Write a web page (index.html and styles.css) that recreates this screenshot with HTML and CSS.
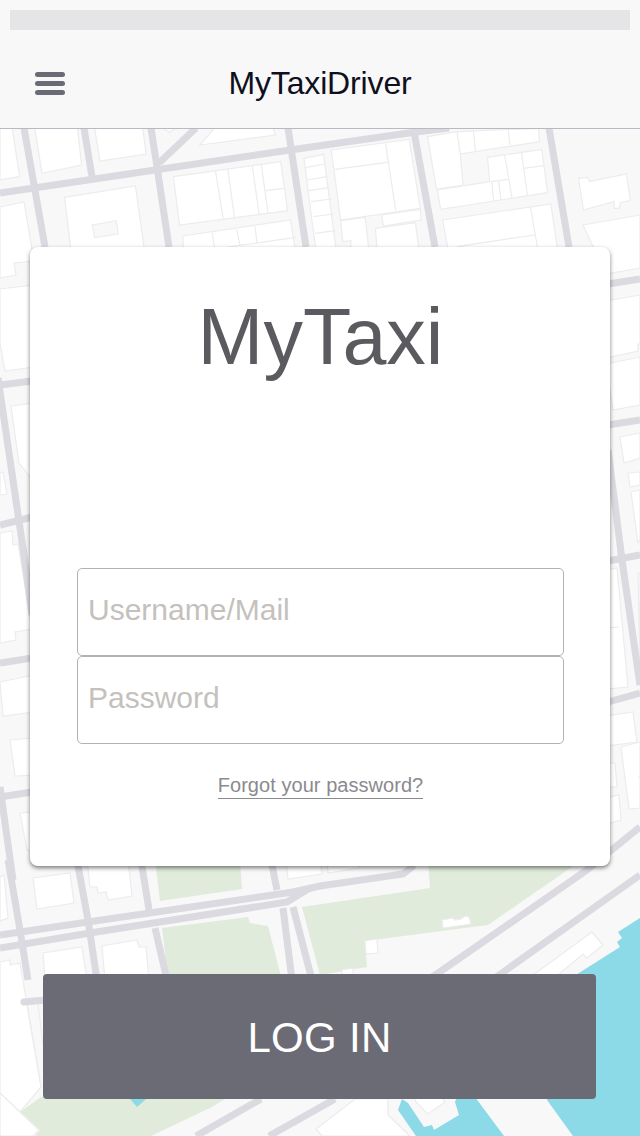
FILE: index.html
```html
<!DOCTYPE html>
<html>
<head>
    <title>MyTaxiDriver</title>
    <link rel="stylesheet" href="styles.css">
</head>
<body>
<svg class="map" viewBox="0 0 640 1136" width="640" height="1136">
    <!-- top strip -->
    <g transform="matrix(.408 0 0 .3333 0 0)">
        <g class="bld">
            <polygon points="85,385 190,385 200,495 103,520"/>
            <polygon points="232,385 350,385 358,462 245,483"/>
            <polygon points="490,435 525,385 670,385 675,405"/>
            <polygon points="400,385 430,385 415,397"/>
            <polygon points="0,385 30,385 48,530 0,540"/>
            <polygon points="425,530 688,485 705,632 440,675"/>
            <polyline points="528,512 547,655"/><polyline points="558,505 575,655"/><polyline points="618,495 635,642"/><polyline points="640,490 657,640"/><polyline points="652,572 695,565"/>
            <polygon points="158,592 332,558 355,760 175,760"/>
            <polygon class="alt" points="226,675 285,662 290,702 232,713"/>
            <polygon points="448,708 712,660 725,760 450,760"/>
            <polyline points="520,698 528,760"/><polyline points="580,688 588,735"/><polyline points="625,680 630,730"/><polyline points="450,760 725,712"/>
            <polygon points="745,475 793,463 825,760 775,760"/>
            <polyline points="748,503 797,492"/><polyline points="752,540 802,530"/><polyline points="757,572 806,563"/><polyline points="762,605 812,597"/><polyline points="768,650 818,642"/><polyline points="772,700 822,692"/>
            <polygon points="812,450 1003,418 1030,625 835,660"/>
            <polyline points="820,508 950,487"/><polyline points="945,430 970,632"/>
            <polygon points="835,662 895,652 905,760 860,760 860,722 840,725"/>
            <polygon points="935,645 1030,628 1032,660 940,678"/>
            <polygon points="920,685 1018,668 1028,760 925,760"/>
            <polygon points="1048,410 1120,395 1320,385 1322,425 1128,462 1135,555 1070,568"/>
            <polyline points="1120,395 1128,460"/><polyline points="1160,390 1165,452"/><polyline points="1245,385 1250,435"/>
            <polygon points="1072,570 1200,545 1195,472 1328,448 1342,578 1080,628"/>
            <polyline points="1237,465 1255,595"/><polyline points="1278,455 1293,588"/><polyline points="1283,505 1332,497"/><polyline points="1203,545 1245,538"/><polyline points="1205,545 1210,603"/><polyline points="1222,542 1228,600"/>
            <polygon points="1085,660 1350,612 1368,760 1100,760"/>
            <polyline points="1300,622 1320,760"/><polyline points="1120,740 1310,705"/>
            <polygon points="1418,535 1440,532 1445,545 1535,522 1545,602 1520,608 1518,625 1505,625 1505,605 1430,630"/>
        </g>
    </g>

    <!-- left edge -->
    <g class="bld">
        <polygon points="0,207 24,202 34,261 14,263 16,275 0,278"/>
        <polygon points="0,289 34,285 34,367 5,371 0,343"/>
        <polygon points="11,406 34,403 34,482 19,463"/>
        <polygon points="0,473 3,472 7,494 0,495"/>
        <polygon points="0,533 12,531 13,545 18,544 32,629 15,632 16,640 0,643"/>
        <polygon points="0,682 34,675 34,712 3,716"/>
        <polygon points="10,740 34,738 34,775 15,776"/>
        <polygon points="20,813 34,812 34,850 27,850"/>
    </g>

    <!-- right edge -->
    <g class="bld">
        <polygon points="583,225 640,215 640,268 606,274"/>
        <polygon points="606,301 640,295 640,344 638,344 638,351 606,358"/>
        <polygon points="606,364 640,357 640,405 613,410"/>
        <polygon points="620,437 640,433 640,458 624,463"/>
        <polygon points="628,473 640,472 640,485 630,487"/>
        <polygon points="631,492 640,490 640,540 638,543"/>
        <polygon points="606,570 617,568 628,687 606,689"/>
        <polyline points="606,628 619,627"/>
        <polygon points="638,573 640,573 640,670"/>
        <polygon points="606,716 633,712 637,742 606,746"/>
        <polygon points="621,747 640,742 640,808 629,809"/>
        <polyline points="638,777 640,777"/>
        <polygon points="606,763 615,763 617,787 606,787"/>
        <polygon points="606,798 619,795 621,820 606,824"/>
    </g>

    <!-- bottom area -->
    <g class="park">
        <polygon points="155,860 240,860 242,889 160,901"/>
        <polygon points="428,860 430,888 302,907 320,975 367,967 365,941 488,925 582,860"/>
        <polygon points="162,928 248,917 250,923 268,926 282,980 168,980"/>
        <polygon points="20,1112 41,1097 228,1097 212,1107 151,1136 35,1136 40,1130"/>
    </g>
    <g class="water">
        <polygon points="640,918 618,932 622,938 617,942 620,947 571,978 547,1100 573,1136 640,1136"/>
        <polygon points="457,1097 475,1097 504,1136 416,1136 398,1110 402,1099 408,1103 424,1127 432,1125 434,1130 459,1115 455,1102"/>
        <polygon points="130,1099 137,1107 146,1099"/>
    </g>
    <g class="bld">
        <polygon points="0,877 4,875 8,918 0,921"/>
        <polygon points="33,878 70,873 74,903 37,909"/>
        <polygon points="87,860 90,887 97,887 98,893 106,892 108,900 132,896 128,860"/>
        <polygon points="286,860 288,879 322,874 320,860"/>
        <polygon points="327,860 328,873 359,868 359,860"/>
        <polygon points="43,953 82,947 87,980 45,980"/>
        <polygon points="102,946 137,940 139,947 146,947 149,980 105,980"/>
        <polygon points="0,962 10,960 10,965 20,963 41,1087 20,1112 0,1093"/>
        <polygon points="0,1093 20,1112 39,1130 33,1136 0,1136"/>
        <polyline points="27,1004 41,1087"/>
        <polyline points="38,1003 43,1046"/>
        <polygon points="365,941 377,939 378,953 366,954"/>
        <polygon points="442,920 453,918 455,920 461,919 465,916 469,917 471,924 443,928"/>
        <polygon points="342,970 353,968 353,980 342,980"/>
        <polygon points="533,975 592,932 603,945 587,958 583,954 558,975"/>
        <polygon points="316,1129 355,1099 388,1099 388,1115 410,1136 322,1136"/>
        <polygon points="416,1102 428,1114 445,1102 441,1097 414,1097"/>
    </g>

    <!-- roads -->
    <g class="roads">
        <polyline points="0,193 155,170 290,150 416,132 449,128"/>
        <polyline points="24,128 45,247"/>
        <polyline points="84,128 92,177"/>
        <polyline points="151,128 157,167 169,247"/>
        <polyline points="288,128 306,247"/>
        <polyline points="414,132 435,247"/>
        <polyline points="549,128 569,247"/>
        <polyline points="196,128 159,163"/>

        <polyline points="0,385 32,381"/>
        <polyline points="0,525 32,517"/>
        <polyline points="0,663 32,658"/>
        <polyline points="0,797 32,792"/>
        <polyline points="-2,378 24,555 32,615"/>
        <polyline points="0,787 13,880"/>

        <polyline points="608,284 640,279"/>
        <polyline points="608,425 640,420"/>
        <polyline points="608,561 640,555"/>
        <polyline points="608,702 640,693"/>
        <polyline points="608,450 622,560 640,685"/>

        <polyline points="8,860 20,930 28,980"/>
        <polyline points="77,860 88,920 97,980"/>
        <polyline points="141,860 149,910"/>
        <polyline points="155,928 167,980"/>
        <polyline points="271,860 277,890"/>
        <polyline points="0,935 88,922 293,892 320,886 403,874 412,867 412,860"/>
        <polyline points="0,948 90,933 287,902 310,888"/>
        <polyline points="283,908 292,980"/>
        <polyline points="293,907 312,980"/>
        <polyline points="640,827 587,870 428,980"/>
        <polyline points="640,875 492,980"/>
        <polyline class="stub" points="24,1002 45,1000"/>
        <polyline points="261,1099 196,1136"/>
        <polyline points="335,1099 269,1136"/>
    </g>
</svg>

<div class="page">
    <div class="header">
        <div class="status"></div>
        <div class="nav">
            <div class="burger"><span></span><span></span><span></span></div>
            <div class="brand">MyTaxiDriver</div>
        </div>
    </div>

    <div class="card">
        <h1>MyTaxi</h1>
        <input type="text" placeholder="Username/Mail">
        <input type="password" placeholder="Password">
        <a class="forgot" href="#">Forgot your password?</a>
    </div>

    <button class="login">LOG IN</button>
</div>
</body>
</html>
```

FILE: styles.css
```css
body {
    font-family: "Liberation Sans", Arial, sans-serif;
    background-color: #f8f8f8;
    margin: 0;
    height: 1136px;
    overflow: hidden;
    position: relative;
}
.map {
    position: absolute;
    top: 0;
    left: 0;
}
.map polygon, .map polyline {
    vector-effect: non-scaling-stroke;
}
.bld polygon {
    fill: #fff;
    stroke: #ececee;
    stroke-width: 1.2;
}
.bld polygon.alt {
    fill: #f8f8f8;
}
.bld polyline {
    fill: none;
    stroke: #ececee;
    stroke-width: 1.2;
}
.park polygon {
    fill: #e1ebdb;
}
.water polygon {
    fill: #8cd9e8;
}
.roads polyline {
    fill: none;
    stroke: #dadae0;
    stroke-width: 7;
}
.roads .stub {
    stroke-linecap: round;
}
.page {
    position: relative;
    display: flex;
    flex-direction: column;
    align-items: center;
}
.header {
    width: 100%;
    height: 118px;
    padding-top: 10px;
    background-color: #f8f8f8;
    border-bottom: 1px solid #b9b9c3;
}
.status {
    height: 20px;
    margin: 0 10px;
    background-color: #e5e5e7;
}
.nav {
    display: grid;
    grid-template-columns: 1fr auto 1fr;
    align-items: center;
    height: 66px;
    margin-top: 20px;
}
.burger {
    display: flex;
    flex-direction: column;
    gap: 4px;
    width: 30px;
    margin-left: 35px;
}
.burger span {
    height: 5px;
    border-radius: 3px;
    background-color: #6b6b75;
}
.brand {
    grid-column: 2;
    font-size: 32px;
    letter-spacing: -0.15px;
    color: #0f0f1e;
}
.card {
    display: flex;
    flex-direction: column;
    align-items: center;
    box-sizing: border-box;
    width: 580px;
    height: 619px;
    margin-top: 118px;
    padding: 50px 46px 0 47px;
    background: white;
    border-radius: 8px;
    box-shadow: 0 2px 4px rgba(0, 0, 0, 0.5);
}
h1 {
    font-size: 79px;
    font-weight: normal;
    line-height: 80px;
    color: #5b5b5f;
    margin: 0 0 191px;
}
input {
    box-sizing: border-box;
    width: 100%;
    height: 88px;
    padding: 0 10px 4px;
    border: 1px solid #b1b1b8;
    border-radius: 5px;
    font-family: inherit;
    font-size: 30px;
    background: white;
}
input::placeholder {
    color: #c4c1bd;
    opacity: 1;
}
.forgot {
    margin-top: 28px;
    font-size: 20px;
    line-height: 26px;
    letter-spacing: 0.05px;
    color: #8a8a8f;
    text-decoration: none;
    border-bottom: 1px solid #8a8a8f;
}
.login {
    width: 553px;
    height: 125px;
    margin-top: 108px;
    margin-right: 1px;
    padding-top: 3px;
    background-color: #6b6b75;
    color: white;
    font-family: inherit;
    font-size: 42px;
    letter-spacing: 0.3px;
    border: none;
    border-radius: 4px;
}
```
